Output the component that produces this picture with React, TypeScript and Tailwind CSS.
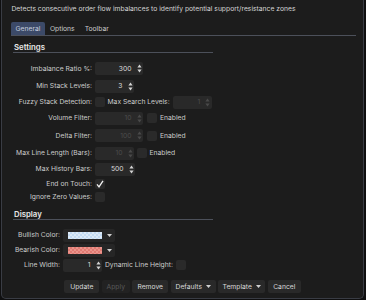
import React from "react";

function Spinner({ disabled }: { disabled?: boolean }) {
  const c = disabled ? "#4a4a4a" : "#d4d4d4";
  return (
    <svg width="5" height="9" viewBox="0 0 5 9" className="shrink-0">
      <polygon points="0.4,3.6 2.5,0.6 4.6,3.6" fill={c} />
      <polygon points="0.4,5.4 2.5,8.4 4.6,5.4" fill={c} />
    </svg>
  );
}

function SpinInput({
  value,
  disabled,
  w,
}: {
  value: string;
  disabled?: boolean;
  w: string;
}) {
  return (
    <div
      className={
        "h-[13px] bg-[#292929] rounded-[2px] flex items-center justify-end pr-[1.5px] gap-[5px] " +
        w
      }
    >
      <span className={disabled ? "text-[#4c4c4c]" : "text-[#dcdcdc]"}>{value}</span>
      <Spinner disabled={disabled} />
    </div>
  );
}

function Checkbox({ checked }: { checked?: boolean }) {
  return (
    <div className="w-[10px] h-[10px] bg-[#2a2a2a] rounded-[2px] flex items-center justify-center shrink-0">
      {checked && (
        <svg width="8" height="8" viewBox="0 0 8 8">
          <path d="M1 4.3 L3 6.8 L7 0.8" stroke="#f2f2f2" strokeWidth="1.3" fill="none" />
        </svg>
      )}
    </div>
  );
}

function Caret({ color = "#d0d0d0" }: { color?: string }) {
  return (
    <svg width="5" height="3" viewBox="0 0 5 3" className="shrink-0">
      <polygon points="0,0 5,0 2.5,3" fill={color} />
    </svg>
  );
}

function Swatch({ a, b, id }: { a: string; b: string; id: string }) {
  return (
    <svg width="34" height="7" viewBox="0 0 34 7" className="shrink-0">
      <defs>
        <pattern id={id} width="4" height="4" patternUnits="userSpaceOnUse">
          <rect width="4" height="4" fill={a} />
          <rect width="2" height="2" fill={b} />
          <rect x="2" y="2" width="2" height="2" fill={b} />
        </pattern>
      </defs>
      <rect width="34" height="7" fill={`url(#${id})`} />
    </svg>
  );
}

function ColorPick({ a, b, id }: { a: string; b: string; id: string }) {
  return (
    <div className="h-[13px] w-[52px] bg-[#262626] rounded-[2px] flex items-center pl-[4.5px] gap-[5px]">
      <Swatch a={a} b={b} id={id} />
      <Caret />
    </div>
  );
}

function Button({
  children,
  w,
  dim,
  caret,
}: {
  children: React.ReactNode;
  w: string;
  dim?: boolean;
  caret?: boolean;
}) {
  return (
    <div
      className={
        "h-[13px] rounded-[2px] flex items-center justify-center gap-[4px] " +
        (dim ? "bg-[#222222] text-[#5a5a5a] " : "bg-[#292929] text-[#d8d8d8] ") +
        w
      }
    >
      <span>{children}</span>
      {caret && <Caret />}
    </div>
  );
}

export default function App() {
  return (
    <div className="w-[366px] h-[300px] bg-[#0f0f10] overflow-hidden font-['Inter','Noto_Sans',sans-serif] text-[6.75px] leading-[8px] text-[#cbcbcb]">
      <div className="ml-[1px] w-[363px] h-[299px] bg-[#1c1c1c] border-x border-b border-[#393c44] rounded-b-[5px] flex flex-col">
        {/* description */}
        <p className="pl-[9.5px] pt-[5px] h-[13px] text-[#d4d4d4] whitespace-nowrap">
          Detects consecutive order flow imbalances to identify potential support/resistance zones
        </p>

        {/* tabs */}
        <div className="mt-[9px] ml-[9px] mr-[7px] flex border-b border-[#4c505a]">
          <div className="h-[13px] px-[4.5px] bg-[#3c4a68] rounded-t-[2px] flex items-center text-[#c6cede]">
            General
          </div>
          <div className="h-[13px] px-[5px] flex items-center text-[#cccccc]">Options</div>
          <div className="h-[13px] px-[5px] flex items-center text-[#cccccc]">Toolbar</div>
        </div>

        {/* Settings group */}
        <div className="ml-[11px] w-[200px] flex flex-col">
          <div className="mt-[6px] h-[11px] pl-[1px] border-b border-[#4c505a] font-semibold text-[7.8px] leading-[10px] text-[#e8e8e8]">
            Settings
          </div>

          <div className="mt-[6.5px] flex flex-col">
            <div className="h-[18px] flex items-center">
              <div className="w-[79px] text-right whitespace-nowrap">Imbalance Ratio %:</div>
              <div className="ml-[3px]">
                <SpinInput value="300" w="w-[48px]" />
              </div>
            </div>

            <div className="h-[17px] flex items-center">
              <div className="w-[79px] text-right whitespace-nowrap">Min Stack Levels:</div>
              <div className="ml-[3px]">
                <SpinInput value="3" w="w-[39px]" />
              </div>
            </div>

            <div className="h-[15px] flex items-center">
              <div className="w-[79px] text-right whitespace-nowrap">Fuzzy Stack Detection:</div>
              <div className="ml-[3px] flex items-center">
                <Checkbox />
                <span className="ml-[2.5px] whitespace-nowrap">Max Search Levels:</span>
                <div className="ml-[3px]">
                  <SpinInput value="1" disabled w="w-[39px]" />
                </div>
              </div>
            </div>

            <div className="h-[17px] flex items-center">
              <div className="w-[79px] text-right whitespace-nowrap">Volume Filter:</div>
              <div className="ml-[3px] flex items-center">
                <SpinInput value="10" disabled w="w-[48px]" />
                <div className="ml-[4px]">
                  <Checkbox />
                </div>
                <span className="ml-[3px]">Enabled</span>
              </div>
            </div>

            <div className="h-[18px] flex items-center">
              <div className="w-[79px] text-right whitespace-nowrap">Delta Filter:</div>
              <div className="ml-[3px] flex items-center">
                <SpinInput value="100" disabled w="w-[48px]" />
                <div className="ml-[4px]">
                  <Checkbox />
                </div>
                <span className="ml-[3px]">Enabled</span>
              </div>
            </div>

            <div className="h-[17px] flex items-center">
              <div className="w-[79px] text-right whitespace-nowrap">Max Line Length (Bars):</div>
              <div className="ml-[3px] flex items-center">
                <SpinInput value="10" disabled w="w-[39px]" />
                <div className="ml-[3px]">
                  <Checkbox />
                </div>
                <span className="ml-[2.5px]">Enabled</span>
              </div>
            </div>

            <div className="h-[15px] flex items-center">
              <div className="w-[79px] text-right whitespace-nowrap">Max History Bars:</div>
              <div className="ml-[3px]">
                <SpinInput value="500" w="w-[40px]" />
              </div>
            </div>

            <div className="h-[14px] flex items-center">
              <div className="w-[79px] text-right whitespace-nowrap">End on Touch:</div>
              <div className="ml-[3px]">
                <Checkbox checked />
              </div>
            </div>

            <div className="h-[13px] flex items-center">
              <div className="w-[79px] text-right whitespace-nowrap">Ignore Zero Values:</div>
              <div className="ml-[3px]">
                <Checkbox />
              </div>
            </div>
          </div>

          {/* Display */}
          <div className="mt-[5.8px] h-[11px] pl-[1px] border-b border-[#4c505a] font-semibold text-[7.8px] leading-[10px] text-[#e8e8e8]">
            Display
          </div>

          <div className="mt-[7.5px] flex flex-col">
            <div className="h-[15px] flex items-center">
              <div className="w-[47px] text-right whitespace-nowrap">Bullish Color:</div>
              <div className="ml-[3px]">
                <ColorPick a="#c4dcf4" b="#dceaf8" id="bull" />
              </div>
            </div>
            <div className="h-[15px] flex items-center">
              <div className="w-[47px] text-right whitespace-nowrap">Bearish Color:</div>
              <div className="ml-[3px]">
                <ColorPick a="#e07a72" b="#ea948c" id="bear" />
              </div>
            </div>
            <div className="h-[15px] flex items-center">
              <div className="w-[47px] text-right whitespace-nowrap">Line Width:</div>
              <div className="ml-[3px] flex items-center">
                <SpinInput value="1" w="w-[39px]" />
                <span className="ml-[3px] whitespace-nowrap">Dynamic Line Height:</span>
                <div className="ml-[3.5px]">
                  <Checkbox />
                </div>
              </div>
            </div>
          </div>
        </div>

        {/* buttons */}
        <div className="mt-[7.5px] flex justify-center gap-[2.5px]">
          <Button w="w-[35px]">Update</Button>
          <Button w="w-[28px]" dim>
            Apply
          </Button>
          <Button w="w-[36px]">Remove</Button>
          <Button w="w-[45px]" caret>
            Defaults
          </Button>
          <Button w="w-[47px]" caret>
            Template
          </Button>
          <Button w="w-[33px]">Cancel</Button>
        </div>
      </div>
    </div>
  );
}
